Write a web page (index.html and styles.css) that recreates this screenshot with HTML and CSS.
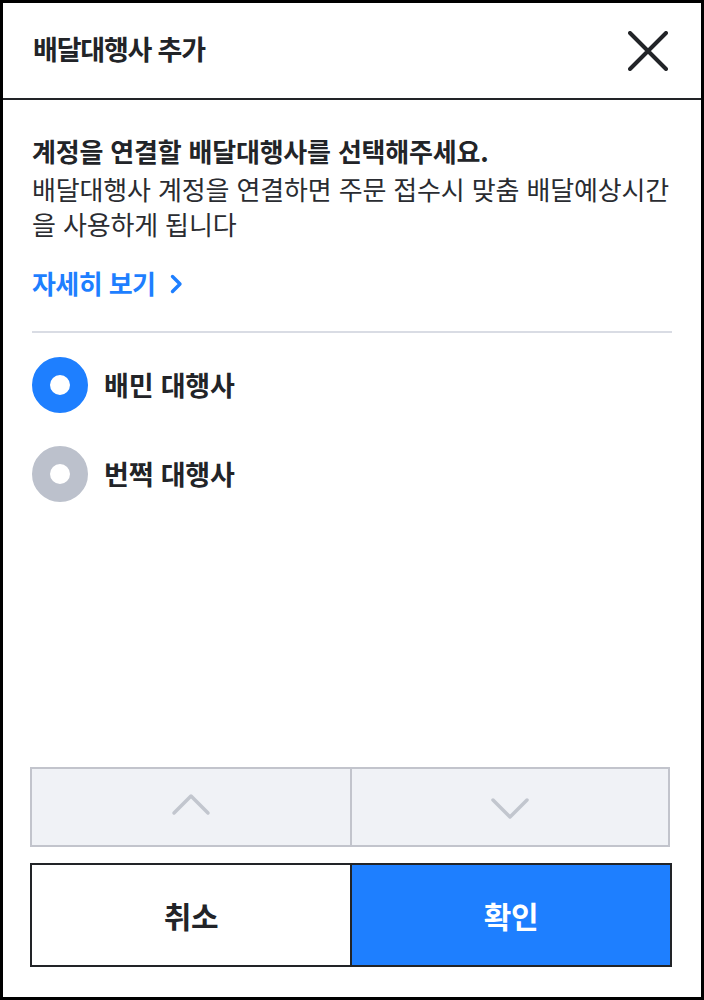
FILE: index.html
```html
<!DOCTYPE html>
<html lang="ko">
<head>
<meta charset="utf-8">
<title>배달대행사 추가</title>
<link rel="stylesheet" href="styles.css">
</head>
<body>
<div class="app">
  <header class="header">
    <h1 class="title">배달대행사 추가</h1>
    <svg class="close" width="40" height="40" viewBox="0 0 40 40" aria-label="닫기">
      <path d="M2 2 L38 38 M38 2 L2 38" stroke="#222428" stroke-width="4" stroke-linecap="round" fill="none"/>
    </svg>
  </header>
  <main class="content">
    <p class="heading">계정을 연결할 배달대행사를 선택해주세요.</p>
    <p class="desc">배달대행사 계정을 연결하면 주문 접수시 맞춤 배달예상시간<br>을 사용하게 됩니다</p>
    <a class="more">자세히 보기
      <svg class="more-icon" width="13" height="20" viewBox="0 0 13 20">
        <path d="M2.5 2.5 L10 10 L2.5 17.5" stroke="#1e7fff" stroke-width="3.4" stroke-linecap="round" stroke-linejoin="round" fill="none"/>
      </svg>
    </a>
    <div class="divider"></div>
    <div class="options">
      <div class="option">
        <span class="radio radio-on"></span>
        <span class="option-label">배민 대행사</span>
      </div>
      <div class="option">
        <span class="radio radio-off"></span>
        <span class="option-label">번쩍 대행사</span>
      </div>
    </div>
  </main>
  <footer class="footer">
    <div class="pager">
      <div class="pager-cell">
        <svg class="chev chev-up" width="40" height="24" viewBox="0 0 40 24">
          <path d="M3 20 L20 3 L37 20" stroke="#c2c6ce" stroke-width="3.5" stroke-linecap="round" stroke-linejoin="round" fill="none"/>
        </svg>
      </div>
      <div class="pager-cell pager-cell-right">
        <svg class="chev chev-down" width="40" height="24" viewBox="0 0 40 24">
          <path d="M3 3 L20 20 L37 3" stroke="#c2c6ce" stroke-width="3.5" stroke-linecap="round" stroke-linejoin="round" fill="none"/>
        </svg>
      </div>
    </div>
    <div class="actions">
      <button class="btn btn-cancel">취소</button>
      <button class="btn btn-ok">확인</button>
    </div>
  </footer>
</div>
</body>
</html>
```
FILE: styles.css
```css
html, body {
  margin: 0;
  padding: 0;
  background: #ffffff;
}

body {
  font-family: "Noto Sans CJK KR", "Noto Sans", sans-serif;
  color: #222428;
}

.app {
  width: 704px;
  height: 1000px;
  box-sizing: border-box;
  border: 3px solid #000000;
  display: flex;
  flex-direction: column;
  background: #ffffff;
}

.header {
  height: 95px;
  border-bottom: 2px solid #222428;
  display: flex;
  align-items: center;
  justify-content: space-between;
  padding: 0 33px 0 30px;
  flex-shrink: 0;
}

.title {
  margin: 0;
  font-size: 27px;
  font-weight: 700;
  letter-spacing: -1.2px;
  line-height: 40px;
  color: #222428;
  margin-top: -3px;
}

.close {
  display: block;
  margin-top: 1px;
}

.content {
  flex: 1;
  padding: 34px 29px 0 29px;
  display: flex;
  flex-direction: column;
}

.heading {
  margin: 0;
  font-size: 26px;
  font-weight: 700;
  line-height: 34px;
  letter-spacing: -0.2px;
  color: #222428;
}

.desc {
  margin: 3px 0 0 0;
  font-size: 26px;
  font-weight: 400;
  line-height: 35px;
  letter-spacing: -0.15px;
  color: #2a2c31;
}

.more {
  margin-top: 25px;
  display: flex;
  align-items: center;
  gap: 15px;
  font-size: 26px;
  font-weight: 600;
  line-height: 34px;
  color: #1e7fff;
  letter-spacing: -0.6px;
}

.more-icon {
  display: block;
  margin-top: 1px;
}

.divider {
  margin-top: 31px;
  height: 2px;
  background: #d9dce4;
}

.options {
  margin-top: 24px;
  display: flex;
  flex-direction: column;
  gap: 33px;
}

.option {
  display: flex;
  align-items: center;
  gap: 16px;
}

.radio {
  width: 56px;
  height: 56px;
  border-radius: 50%;
  box-sizing: border-box;
  border: 18px solid #1e7fff;
  background: #ffffff;
  flex-shrink: 0;
}

.radio-off {
  border-color: #bcc1cc;
}

.option-label {
  font-size: 27px;
  font-weight: 700;
  line-height: 34px;
  letter-spacing: -0.2px;
  color: #222428;
}

.footer {
  padding: 0 29px 30px 27px;
  display: flex;
  flex-direction: column;
  gap: 16px;
  flex-shrink: 0;
}

.pager {
  height: 80px;
  box-sizing: border-box;
  margin-right: 2px;
  border: 2px solid #c2c4cc;
  background: #f0f2f6;
  display: grid;
  grid-template-columns: 1fr 1fr;
}

.pager-cell {
  display: flex;
  align-items: center;
  justify-content: center;
}

.pager-cell-right {
  border-left: 2px solid #c2c4cc;
}

.chev {
  display: block;
}

.chev-up {
  margin-top: -4px;
}

.chev-down {
  margin-top: 4px;
}

.actions {
  height: 104px;
  box-sizing: border-box;
  border: 2px solid #222428;
  display: grid;
  grid-template-columns: 320px 1fr;
}

.btn {
  box-sizing: border-box;
  margin: 0;
  padding: 0;
  border: none;
  font-family: "Noto Sans CJK KR", "Noto Sans", sans-serif;
  font-size: 30px;
  font-weight: 700;
  letter-spacing: -0.3px;
  cursor: pointer;
}

.btn-cancel {
  background: #ffffff;
  color: #222428;
  border-right: 2px solid #222428;
}

.btn-ok {
  background: #1e7fff;
  color: #ffffff;
}
```
